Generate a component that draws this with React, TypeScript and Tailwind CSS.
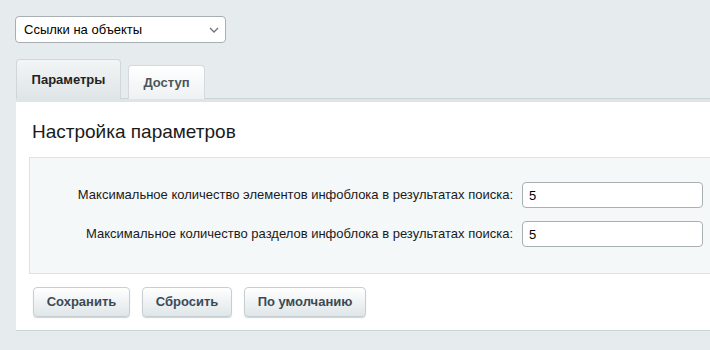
import React from 'react';

// Форма настроек модуля поиска
const font = { fontFamily: '"Liberation Sans", Arial, sans-serif' };

const fields = [
  { label: 'Максимальное количество элементов инфоблока в результатах поиска:', value: '5' },
  { label: 'Максимальное количество разделов инфоблока в результатах поиска:', value: '5' },
];

function Button({ children, w }: { children: React.ReactNode; w: string }) {
  return (
    <button
      className={`h-[30px] ${w} rounded-[4px] border border-[#c6ced1] bg-gradient-to-b from-[#ffffff] to-[#dfe6e9] text-[13px] font-bold text-[#3c4a53] shadow-[0_1px_1px_rgba(0,0,0,0.18)]`}
    >
      {children}
    </button>
  );
}

export default function App() {
  return (
    <div className="w-[710px] h-[350px] overflow-hidden bg-[#e6ebed] text-[#000]" style={font}>
      <div className="pt-[16px] pl-[15px]">
        <div className="flex items-center justify-between w-[211px] h-[27px] rounded-[4px] border border-[#a8afb3] bg-white pl-[8px] pr-[6px] text-[13px] text-[#000]">
          <span>Ссылки на объекты</span>
          <svg width="10" height="6" viewBox="0 0 10 6" fill="none">
            <path d="M1 1l4 4 4-4" stroke="#6f7478" strokeWidth="1.3" />
          </svg>
        </div>
      </div>

      <div className="flex items-end gap-[7px] pl-[16px] mt-[16px]">
        <div className="flex items-center justify-center w-[105px] h-[40px] rounded-t-[4px] border border-b-0 border-[#d0d7da] bg-gradient-to-b from-[#f3f5f6] to-[#dfe5e7] text-[13px] font-bold text-[#222]">
          Параметры
        </div>
        <div className="flex items-center justify-center w-[77px] h-[34px] rounded-t-[4px] border border-b-0 border-[#d3d9dc] bg-gradient-to-b from-[#ffffff] to-[#eef1f2] text-[13px] font-bold text-[#4a555c]">
          Доступ
        </div>
      </div>

      <div className="ml-[16px] bg-white border-t-[3px] border-[#dfe5e7] shadow-[0_1px_0_#cdd4d7,0_-1px_0_#cdd4d7] h-[231px]">
        <div className="pt-[18px] pl-[16px] text-[19px] leading-[24px] text-[#1a1a1a]">Настройка параметров</div>
        <div className="mt-[13px] ml-[13px] border border-r-0 border-[#dbe2e4] bg-[#f5f8f9] pt-[24px] pb-[26px] flex flex-col gap-[13px]">
          {fields.map(f => (
            <div key={f.label} className="flex items-center">
              <div className="w-[483px] text-right text-[13px] text-[#1a1a1a]">{f.label}</div>
              <input
                readOnly
                value={f.value}
                className="ml-[9px] w-[181px] h-[26px] rounded-[4px] border border-[#a9b0b3] bg-white px-[6px] text-[13px] text-[#000] outline-none"
                style={font}
              />
            </div>
          ))}
        </div>
        <div className="flex gap-[12px] pl-[17px] pt-[13px]">
          <Button w="w-[97px]">Сохранить</Button>
          <Button w="w-[90px]">Сбросить</Button>
          <Button w="w-[122px]">По умолчанию</Button>
        </div>
      </div>
    </div>
  );
}
